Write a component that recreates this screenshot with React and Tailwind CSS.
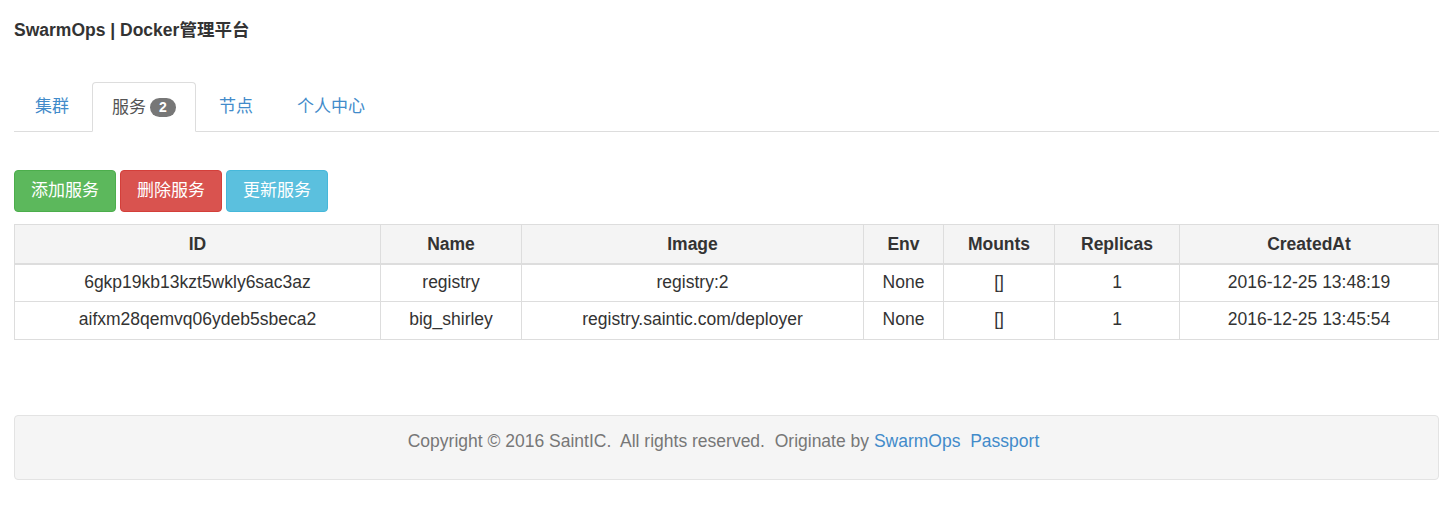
import React from 'react';

const services = [
  { id: '6gkp19kb13kzt5wkly6sac3az', name: 'registry', image: 'registry:2', env: 'None', mounts: '[]', replicas: 1, createdAt: '2016-12-25 13:48:19' },
  { id: 'aifxm28qemvq06ydeb5sbeca2', name: 'big_shirley', image: 'registry.saintic.com/deployer', env: 'None', mounts: '[]', replicas: 1, createdAt: '2016-12-25 13:45:54' },
];

const cols = [
  { label: 'ID', w: 'w-[366px]' },
  { label: 'Name', w: 'w-[141px]' },
  { label: 'Image', w: 'w-[342px]' },
  { label: 'Env', w: 'w-[80px]' },
  { label: 'Mounts', w: 'w-[111px]' },
  { label: 'Replicas', w: 'w-[125px]' },
  { label: 'CreatedAt', w: 'w-[259px]' },
];

export default function App() {
  return (
    <div className="min-h-[509px] bg-white text-[#333] text-[16px] font-['Liberation_Sans','Noto_Sans_CJK_SC',sans-serif]">
      <div className="w-[1425px] ml-[14px] pt-[19px]">
        <div className="h-[22px] leading-[22px] font-bold text-[17.5px]">SwarmOps | Docker管理平台</div>

        {/* tabs */}
        <ul className="mt-[41px] flex border-b border-[#ddd] text-[17px]">
          <li className="mr-[2px] -mb-px">
            <a className="flex items-center h-[49px] px-[20px] pt-[1px] text-[#428bca] border border-transparent rounded-t-[4px]">集群</a>
          </li>
          <li className="mr-[2px] -mb-px">
            <a className="flex items-center h-[50px] px-[19px] pt-[1px] text-[#555] bg-white border border-[#ddd] border-b-transparent rounded-t-[4px]">
              服务
              <span className="ml-[4px] inline-flex items-center justify-center h-[19px] w-[26px] rounded-full bg-[#777] text-white text-[14px] font-bold">2</span>
            </a>
          </li>
          <li className="mr-[2px] -mb-px">
            <a className="flex items-center h-[49px] px-[20px] pt-[1px] text-[#428bca] border border-transparent">节点</a>
          </li>
          <li className="mr-[2px] -mb-px">
            <a className="flex items-center h-[49px] px-[20px] pt-[1px] text-[#428bca] border border-transparent">个人中心</a>
          </li>
        </ul>

        {/* actions */}
        <div className="mt-[38px] flex gap-[4px] text-[17px] text-white">
          <button className="w-[102px] h-[42px] rounded-[4px] bg-[#5cb85c] border border-[#4cae4c]">添加服务</button>
          <button className="w-[102px] h-[42px] rounded-[4px] bg-[#d9534f] border border-[#d43f3a]">删除服务</button>
          <button className="w-[102px] h-[42px] rounded-[4px] bg-[#5bc0de] border border-[#46b8da]">更新服务</button>
        </div>

        {/* table */}
        <table className="mt-[12px] w-full table-fixed border-collapse border border-[#ddd] text-[17.5px]">
          <thead>
            <tr className="bg-[#f4f4f4]">
              {cols.map((c) => (
                <th key={c.label} className={`${c.w} h-[39px] border border-[#ddd] border-b-2 font-bold text-center`}>{c.label}</th>
              ))}
            </tr>
          </thead>
          <tbody>
            {services.map((s) => (
              <tr key={s.id}>
                <td className="h-[38px] pb-[2px] border border-[#ddd] text-center">{s.id}</td>
                <td className="pb-[2px] border border-[#ddd] text-center">{s.name}</td>
                <td className="pb-[2px] border border-[#ddd] text-center">{s.image}</td>
                <td className="pb-[2px] border border-[#ddd] text-center">{s.env}</td>
                <td className="pb-[2px] border border-[#ddd] text-center">{s.mounts}</td>
                <td className="pb-[2px] border border-[#ddd] text-center">{s.replicas}</td>
                <td className="pb-[2px] border border-[#ddd] text-center">{s.createdAt}</td>
              </tr>
            ))}
          </tbody>
        </table>

        {/* footer */}
        <div className="mt-[75px] h-[65px] pt-[14px] pr-[6px] text-center rounded-[4px] border border-[#e3e3e3] bg-[#f5f5f5] text-[17.5px] leading-[22px] text-[#777]">
          <p>
            Copyright © 2016 SaintIC.&nbsp; All rights reserved.&nbsp; Originate by <a className="text-[#428bca]">SwarmOps</a>&nbsp; <a className="text-[#428bca]">Passport</a>
          </p>
        </div>
      </div>
    </div>
  );
}
